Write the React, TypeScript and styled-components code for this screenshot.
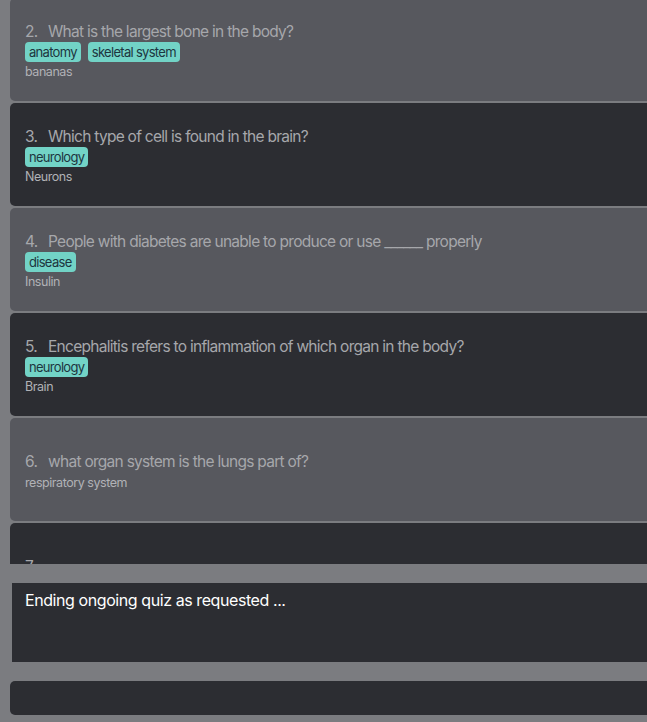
import React from "react";
import styled, { createGlobalStyle } from "styled-components";

const Global = createGlobalStyle`
  html, body { margin: 0; padding: 0; background: #7b7c80; overflow: hidden; }
  body { font-family: Inter, "Noto Sans", sans-serif; }
`;

const Page = styled.div`
  width: 647px;
  height: 722px;
  display: flex;
  flex-direction: column;
  overflow: hidden;
`;

const ListViewport = styled.div`
  height: 564px;
  overflow: hidden;
  flex-shrink: 0;
`;

const List = styled.div`
  display: flex;
  flex-direction: column;
  gap: 2px;
  margin-top: -2px;
  padding-left: 10px;
`;

const Card = styled.div<{ $dark: boolean }>`
  height: 103px;
  width: 660px;
  box-sizing: border-box;
  flex-shrink: 0;
  border-radius: 5px;
  background: ${(p) => (p.$dark ? "#2c2d32" : "#57585e")};
  padding: 0 15px;
  display: flex;
  flex-direction: column;
  justify-content: center;
`;

const Title = styled.div`
  font-size: 15.5px;
  line-height: 24px;
  color: #a6a7ab;
  letter-spacing: -0.72px;
  white-space: nowrap;
`;

const Num = styled.span`
  display: inline-block;
  width: 23px;
`;

const Tags = styled.div`
  display: flex;
  gap: 7px;
  margin: -2px 0 1px;
`;

const Tag = styled.span`
  background: #72d3c6;
  color: #1d3640;
  font-size: 13px;
  line-height: 20px;
  padding: 0 4px;
  border-radius: 4px;
  letter-spacing: -0.7px;
`;

const Answer = styled.div`
  font-size: 12.5px;
  line-height: 15px;
  color: #b1b2b6;
  letter-spacing: -0.45px;
  margin-top: 1px;
  min-height: 15px;
`;

const Message = styled.div`
  margin: 19px 0 0 12px;
  height: 79px;
  background: #2c2d32;
  color: #ffffff;
  font-size: 16px;
  line-height: 20px;
  padding: 7px 13px;
  box-sizing: border-box;
  letter-spacing: -0.42px;
  flex-shrink: 0;
`;

const InputBar = styled.div`
  margin: 19px 0 0 10px;
  height: 34px;
  width: 660px;
  background: #2c2d32;
  border-radius: 5px;
  flex-shrink: 0;
`;

const questions = [
  { n: 2, q: "What is the largest bone in the body?", tags: ["anatomy", "skeletal system"], a: "bananas" },
  { n: 3, q: "Which type of cell is found in the brain?", tags: ["neurology"], a: "Neurons" },
  { n: 4, q: "People with diabetes are unable to produce or use ______ properly", tags: ["disease"], a: "Insulin" },
  { n: 5, q: "Encephalitis refers to inflammation of which organ in the body?", tags: ["neurology"], a: "Brain" },
  { n: 6, q: "what organ system is the lungs part of?", tags: [], a: "respiratory system" },
  { n: 7, q: "", tags: [], a: "" },
];

export default function App() {
  return (
    <Page>
      <Global />
      <ListViewport>
        <List>
          {questions.map((item, i) => (
            <Card key={item.n} $dark={i % 2 === 1}>
              <Title>
                <Num>{item.n}.</Num>
                {item.q}
              </Title>
              {item.tags.length > 0 && (
                <Tags>
                  {item.tags.map((t) => (
                    <Tag key={t}>{t}</Tag>
                  ))}
                </Tags>
              )}
              <Answer>{item.a}</Answer>
            </Card>
          ))}
        </List>
      </ListViewport>
      <Message>Ending ongoing quiz as requested ...</Message>
      <InputBar />
    </Page>
  );
}
